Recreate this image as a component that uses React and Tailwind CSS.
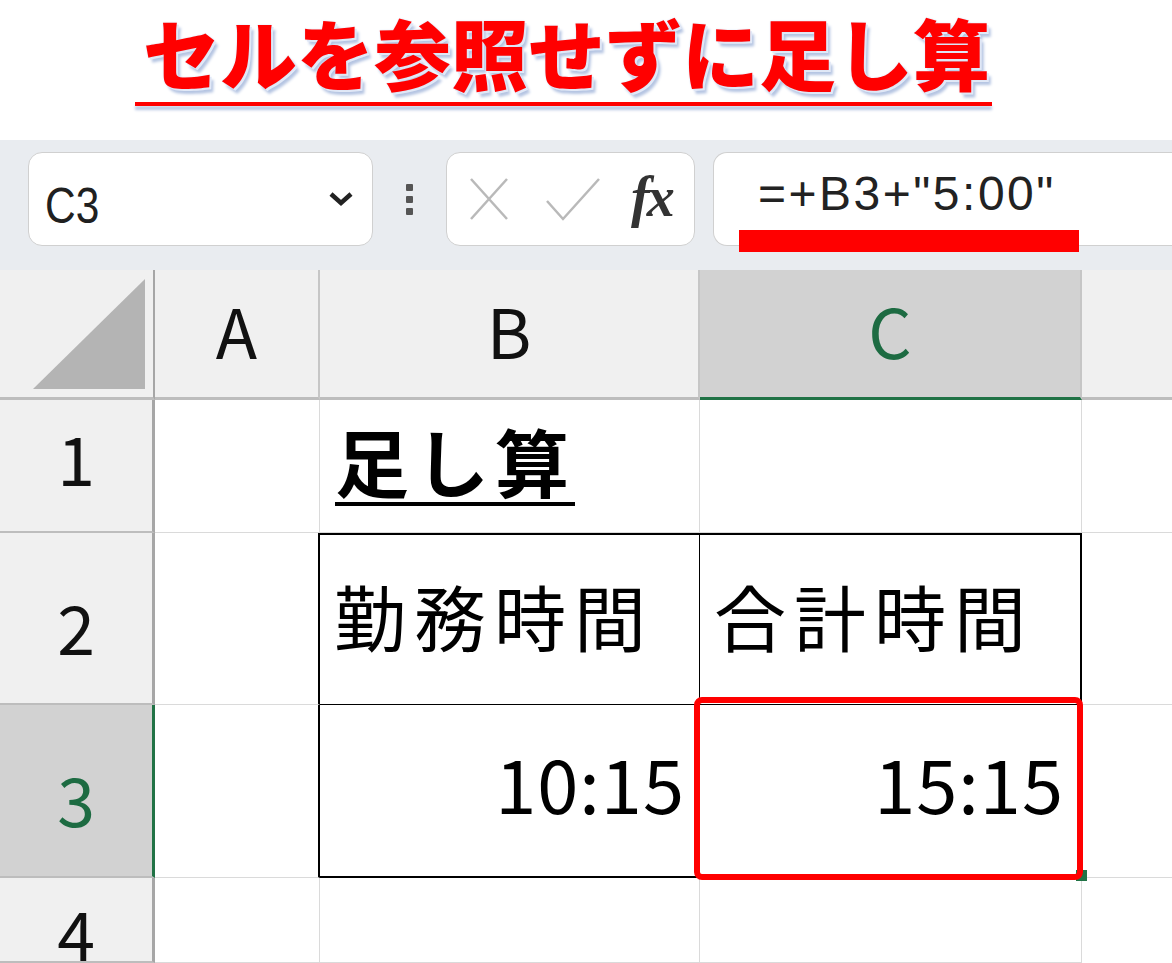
import React from "react";

const jp = "font-['Noto_Sans_CJK_JP',sans-serif]";

function Title() {
  return (
    <div className="h-[140px] bg-white pl-[135px]">
      <div className="inline-flex flex-col">
        <h1 className="whitespace-nowrap pl-[8px] pr-[2px] pt-[10px] pb-[8px] text-[77px] leading-[84px] font-black text-[#ff0000] font-['Noto_Sans_CJK_JP',sans-serif] [text-shadow:0_0_2px_#d5e0f4,2px_2px_0_#e2e9f7,4px_5px_3px_#b4c4e2]">
          セルを参照せずに足し算
        </h1>
        <div className="h-[4px] bg-[#ff0000] shadow-[0_4px_3px_#b9c7e3]" />
      </div>
    </div>
  );
}

function FormulaBar() {
  return (
    <div className="h-[130px] bg-[#e9ecf0] flex items-start pt-[12px] pl-[28px] gap-0">
      <div className="w-[345px] h-[94px] bg-white rounded-[14px] border border-[#d0d0d0] flex items-center pl-[16px] pr-[18px] justify-between">
        <span className="inline-block origin-left scale-x-[0.85] text-[50px] leading-none text-[#202020] font-['Liberation_Sans',sans-serif] mt-[14px]">C3</span>
        <svg width="26" height="16" viewBox="0 0 26 16">
          <path d="M3 3 L13 12 L23 3" stroke="#222" strokeWidth="4.5" fill="none" />
        </svg>
      </div>
      <div className="w-[73px] h-[94px] flex flex-col items-center justify-center gap-[5px]">
        <span className="w-[7px] h-[7px] bg-[#555] rounded-[1px]" />
        <span className="w-[7px] h-[7px] bg-[#555] rounded-[1px]" />
        <span className="w-[7px] h-[7px] bg-[#555] rounded-[1px]" />
      </div>
      <div className="w-[249px] h-[94px] bg-white rounded-[14px] border border-[#d0d0d0] flex items-center pl-[22px] pr-[14px] gap-[36px]">
        <svg width="40" height="44" viewBox="0 0 40 44">
          <path d="M2 2 L38 42 M38 2 L2 42" stroke="#b9b9b9" strokeWidth="2.5" fill="none" />
        </svg>
        <svg width="56" height="44" viewBox="0 0 56 44">
          <path d="M2 24 L18 42 L54 2" stroke="#b9b9b9" strokeWidth="2.5" fill="none" />
        </svg>
        <span className="text-[56px] leading-none italic font-bold text-[#333] font-['Liberation_Serif',serif] tracking-[-3px] ml-[-6px] mt-[-4px]">fx</span>
      </div>
      <div className="relative flex-1 h-[94px] ml-[18px] bg-white rounded-l-[14px] border border-r-0 border-[#d0d0d0] flex items-center pl-[44px]">
        <span className="text-[48px] text-[#222] font-['Liberation_Sans',sans-serif] mt-[-10px] tracking-[2.5px]">=+B3+"5:00"</span>
        <div className="absolute left-[25px] top-[77px] w-[340px] h-[22px] bg-[#ff0000]" />
      </div>
    </div>
  );
}

const gridLine = "border-r border-b border-[#dadada]";

function RowHead({ n, selected, last, offset }) {
  return (
    <div
      className={`flex justify-center ${last ? "items-start pt-[20px]" : "items-center"} border-r-[3px] border-b-2 ${
        selected ? "bg-[#d2d2d2] border-r-[#217346] text-[#1d6b42]" : "bg-[#f0f0f0] border-r-[#a6a6a6] text-[#111]"
      } border-b-[#bdbdbd] text-[68px] leading-none font-['Noto_Sans_CJK_JP',sans-serif] overflow-hidden`}
    >
      <span className={offset}>{n}</span>
    </div>
  );
}

function ColHead({ l, selected }) {
  return (
    <div
      className={`flex items-center justify-center border-r-2 border-r-[#c6c6c6] border-b-[3px] ${
        selected ? "bg-[#d2d2d2] border-b-[#217346] text-[#1d6b42]" : "bg-[#f0f0f0] border-b-[#bdbdbd] text-[#111]"
      } text-[68px] leading-none font-['Noto_Sans_CJK_JP',sans-serif] pb-[8px]`}
    >
      {l}
    </div>
  );
}

function Sheet() {
  return (
    <div className={`relative grid grid-cols-[155px_165px_380px_382px_1fr] grid-rows-[130px_133px_172px_173px_85px] ${jp}`}>
      {/* header row */}
      <div className="bg-[#f0f0f0] border-r-2 border-r-[#a6a6a6] border-b-[3px] border-b-[#bdbdbd] flex items-end justify-end pr-[8px] pb-[8px]">
        <svg width="112" height="110" viewBox="0 0 112 110">
          <polygon points="0,110 112,0 112,110" fill="#b4b4b4" />
        </svg>
      </div>
      <ColHead l="A" />
      <ColHead l="B" />
      <ColHead l="C" selected />
      <div className="bg-[#f0f0f0] border-b-[3px] border-b-[#bdbdbd]" />

      {/* row 1 */}
      <RowHead n="1" offset="mt-[-18px]" />
      <div className={gridLine} />
      <div className={`${gridLine} flex items-center pl-[15px]`}>
        <span className="text-[74px] font-bold leading-none underline decoration-[4px] underline-offset-[10px] text-black tracking-[6px] mt-[-12px]">足し算</span>
      </div>
      <div className={gridLine} />
      <div className="border-b border-[#dadada]" />

      {/* row 2 */}
      <RowHead n="2" offset="mt-[16px]" />
      <div className="border-r-2 border-r-black border-b border-b-[#dadada]" />
      <div className="border-t-2 border-t-black border-r border-r-black border-b border-b-black flex items-center pl-[14px]">
        <span className="text-[72px] leading-none text-black mt-[-10px] tracking-[8px]">勤務時間</span>
      </div>
      <div className="border-t-2 border-t-black border-r-2 border-r-black border-b border-b-black flex items-center pl-[14px]">
        <span className="text-[72px] leading-none text-black mt-[-10px] tracking-[8px]">合計時間</span>
      </div>
      <div className="border-b border-[#dadada]" />

      {/* row 3 */}
      <RowHead n="3" selected offset="mt-[14px]" />
      <div className="border-r-2 border-r-black border-b border-b-[#dadada]" />
      <div className="border-r border-r-black border-b-2 border-b-black flex items-center justify-end pr-[14px]">
        <span className="text-[74px] leading-none text-black mt-[-18px] tracking-[1px]">10:15</span>
      </div>
      <div className="border-r-2 border-r-black border-b-2 border-b-black flex items-center justify-end pr-[16px]">
        <span className="text-[74px] leading-none text-black mt-[-18px] tracking-[1px]">15:15</span>
      </div>
      <div className="border-b border-[#dadada]" />

      {/* row 4 */}
      <RowHead n="4" last />
      <div className={gridLine} />
      <div className={gridLine} />
      <div className={gridLine} />
      <div />

      {/* overlays: selection handle and red highlight */}
      <div className="absolute left-[1076px] top-[600px] w-[11px] h-[11px] bg-[#217346]" />
      <div className="absolute left-[694px] top-[427px] w-[389px] h-[183px] border-[6px] border-[#ff0000] rounded-[8px]" />
    </div>
  );
}

export default function App() {
  return (
    <div className="w-[1172px] h-[963px] overflow-hidden bg-white">
      <Title />
      <FormulaBar />
      <Sheet />
    </div>
  );
}
